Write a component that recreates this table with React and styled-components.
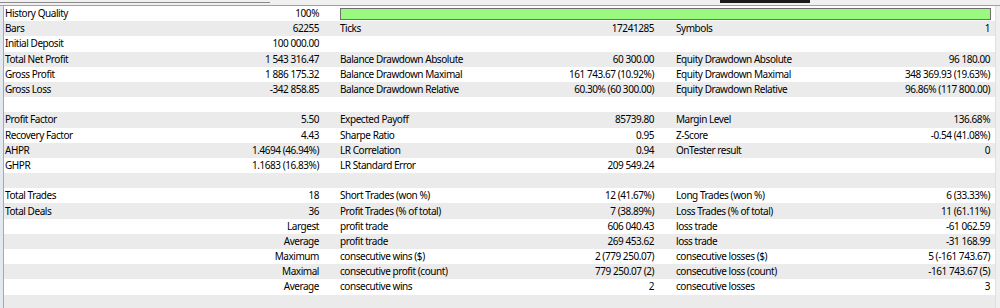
import React from "react";
import styled, { createGlobalStyle } from "styled-components";

const GlobalStyle = createGlobalStyle`
  html, body {
    margin: 0;
    padding: 0;
    background: #f0f0f0;
  }
  body {
    font-family: "Noto Sans", "Open Sans", sans-serif;
    font-size: 10px;
    letter-spacing: -0.45px;
    color: #000;
  }
`;

const Window = styled.div`
  width: 1000px;
  height: 308px;
  overflow: hidden;
  display: flex;
  flex-direction: column;
  background: #f0f0f0;
`;

const TabStrip = styled.div`
  height: 6px;
  flex: none;
  display: flex;
  align-items: flex-start;
  border-bottom: 1px solid #a0a0a0;
  box-sizing: border-box;
`;

const TabEdge = styled.div`
  height: 3px;
  width: ${(p) => p.$w}px;
  margin-left: ${(p) => p.$ml || 0}px;
  border-bottom: 1px solid ${(p) => p.$c};
  background: ${(p) => p.$bg || "transparent"};
  box-sizing: border-box;
`;

const Body = styled.div`
  flex: 1;
  display: flex;
  min-height: 0;
`;

const LeftFrame = styled.div`
  width: 4px;
  flex: none;
  background: #e4e9ef;
  border-right: 1px solid #a8a8a8;
  box-sizing: border-box;
`;

const List = styled.div`
  width: 991px;
  flex: none;
  background: #fff;
`;

const RightFrame = styled.div`
  flex: 1;
  background: #f0f0f0;
  border-left: 1px solid #e0e0e0;
`;

const Row = styled.div`
  height: 15.2px;
  display: grid;
  grid-template-columns: 331px 336px 324px;
  align-items: center;
  background: ${(p) => (p.$odd ? "#ebebeb" : "#fff")};
  line-height: 15px;
  white-space: nowrap;
`;

const Group = styled.div`
  display: flex;
  justify-content: space-between;
  align-items: center;
  padding: 0 16px 0 1px;

  &:nth-child(2) {
    padding: 0 17px 0 5px;
  }
  &:nth-child(3) {
    padding: 0 5px 0 5px;
  }
`;

const Label = styled.span``;

const Value = styled.span`
  text-align: right;
  margin-left: auto;
`;

const QualityBar = styled.div`
  grid-column: 2 / 4;
  margin: 0 4px 0 5px;
  height: 12px;
  box-sizing: border-box;
  border: 1px solid #6f6f6f;
  background: #9afa80;
`;

const rows = [
  ["History Quality", "100%"],
  ["Bars", "62255", "Ticks", "17241285", "Symbols", "1"],
  ["Initial Deposit", "100 000.00"],
  ["Total Net Profit", "1 543 316.47", "Balance Drawdown Absolute", "60 300.00", "Equity Drawdown Absolute", "96 180.00"],
  ["Gross Profit", "1 886 175.32", "Balance Drawdown Maximal", "161 743.67 (10.92%)", "Equity Drawdown Maximal", "348 369.93 (19.63%)"],
  ["Gross Loss", "-342 858.85", "Balance Drawdown Relative", "60.30% (60 300.00)", "Equity Drawdown Relative", "96.86% (117 800.00)"],
  [],
  ["Profit Factor", "5.50", "Expected Payoff", "85739.80", "Margin Level", "136.68%"],
  ["Recovery Factor", "4.43", "Sharpe Ratio", "0.95", "Z-Score", "-0.54 (41.08%)"],
  ["AHPR", "1.4694 (46.94%)", "LR Correlation", "0.94", "OnTester result", "0"],
  ["GHPR", "1.1683 (16.83%)", "LR Standard Error", "209 549.24"],
  [],
  ["Total Trades", "18", "Short Trades (won %)", "12 (41.67%)", "Long Trades (won %)", "6 (33.33%)"],
  ["Total Deals", "36", "Profit Trades (% of total)", "7 (38.89%)", "Loss Trades (% of total)", "11 (61.11%)"],
  ["", "Largest", "profit trade", "606 040.43", "loss trade", "-61 062.59"],
  ["", "Average", "profit trade", "269 453.62", "loss trade", "-31 168.99"],
  ["", "Maximum", "consecutive wins ($)", "2 (779 250.07)", "consecutive losses ($)", "5 (-161 743.67)"],
  ["", "Maximal", "consecutive profit (count)", "779 250.07 (2)", "consecutive loss (count)", "-161 743.67 (5)"],
  ["", "Average", "consecutive wins", "2", "consecutive losses", "3"],
  [],
];

const StatsRow = ({ cells, index }) => {
  const groups = [0, 2, 4].map((i) => [cells[i], cells[i + 1]]);
  return (
    <Row $odd={index % 2 === 1}>
      {index === 0 ? (
        <>
          <Group>
            <Label>{groups[0][0]}</Label>
            <Value>{groups[0][1]}</Value>
          </Group>
          <QualityBar />
        </>
      ) : (
        groups.map(([label, value], i) => (
          <Group key={i}>
            <Label>{label}</Label>
            <Value>{value}</Value>
          </Group>
        ))
      )}
    </Row>
  );
};

export default function App() {
  return (
    <>
      <GlobalStyle />
      <Window>
        <TabStrip>
          <TabEdge $w={270} $c="#8a8a8a" />
          <TabEdge $w={90} $ml={450} $c="#1a1a1a" $bg="#1a1a1a" />
        </TabStrip>
        <Body>
          <LeftFrame />
          <List>
            {rows.map((cells, i) => (
              <StatsRow key={i} cells={cells} index={i} />
            ))}
          </List>
          <RightFrame />
        </Body>
      </Window>
    </>
  );
}
